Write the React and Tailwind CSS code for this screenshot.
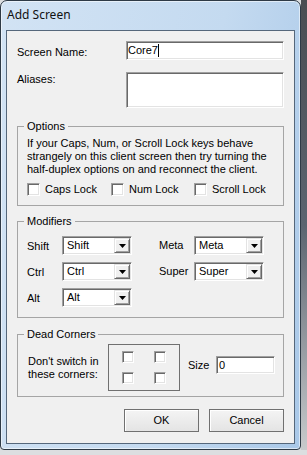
import React from "react";

const sunken =
  "border border-t-[#a0a0a0] border-l-[#a0a0a0] border-r-white border-b-white shadow-[inset_1px_1px_0_#696969,inset_-1px_-1px_0_#e3e3e3] bg-white p-[1px]";

const raised =
  "border border-t-[#e3e3e3] border-l-[#e3e3e3] border-r-[#696969] border-b-[#696969] shadow-[inset_1px_1px_0_#ffffff,inset_-1px_-1px_0_#a0a0a0] bg-[#f0f0f0]";

const CheckBox = ({ small }) => (
  <div className={small ? `${sunken} w-[12px] h-[12px]` : `${sunken} w-[13px] h-[13px]`} />
);

const Combo = ({ value }) => (
  <div className={`${sunken} w-[70px] h-[19px] flex items-center`}>
    <span className="flex-1 pl-[3px] leading-[13px]">{value}</span>
    <div className={`${raised} w-[16px] h-full flex items-center justify-center`}>
      <svg width="7" height="4" viewBox="0 0 7 4">
        <path d="M0 0h7L3.5 4z" fill="#000" />
      </svg>
    </div>
  </div>
);

const Group = ({ title, className, children }) => (
  <fieldset className={`border border-[#a5a5a5] ${className}`}>
    <legend className="ml-[6px] px-[3px] leading-[13px]">{title}</legend>
    {children}
  </fieldset>
);

const ModRow = ({ left, leftVal, right, rightVal }) => (
  <div className="flex items-center h-[19px]">
    <span className="w-[35px] pt-[2px]">{left}</span>
    <Combo value={leftVal} />
    {right && (
      <>
        <span className="ml-[27px] w-[35px]">{right}</span>
        <Combo value={rightVal} />
      </>
    )}
  </div>
);

const Button = ({ children }) => (
  <button className="w-[75px] h-[23px] border border-[#707070] bg-[linear-gradient(to_bottom,#f4f4f4,#e4e4e4)] shadow-[inset_1px_1px_0_#ffffff] text-[11px] leading-[13px]">
    {children}
  </button>
);

export default function App() {
  return (
    <div className="w-[307px] h-[455px] overflow-hidden bg-[#dcdee0] flex flex-col font-['Liberation_Sans',Arial,sans-serif] text-[11px] leading-[13px] text-black">
      <div className="flex h-[450px]">
        <div className="w-[301px] h-full flex flex-col rounded-t-[7px] rounded-b-[4px] border border-[#2e3a46] bg-[linear-gradient(100deg,#d2e3f4,#c4daf0_60%,#a9c8e8)] shadow-[inset_0_0_0_1px_rgba(255,255,255,0.55)] px-[5px] pb-[5px]">
          <div className="h-[29px] flex items-center pl-[1px] pb-[2px] font-['Noto_Sans',sans-serif] text-[12px] text-[#111]">
            Add Screen
          </div>

          <div className="flex-1 border border-[#55677b] bg-[#f0f0f0] pt-[10px] px-[10px] flex flex-col">
            <div className="flex items-center h-[19px]">
              <span className="w-[109px] pt-[3px]">Screen Name:</span>
              <div className={`${sunken} flex-1 h-full flex items-center`}>
                <span>Core7</span>
                <span className="w-[1px] h-[13px] bg-black" />
              </div>
            </div>

            <div className="flex items-start mt-[12px]">
              <span className="w-[109px] pt-[1px]">Aliases:</span>
              <div className={`${sunken} flex-1 h-[36px]`} />
            </div>

            <Group title="Options" className="mt-[12px] h-[86px]">
              <div className="pl-[9px] pt-[4px]">
                <p>
                  If your Caps, Num, or Scroll Lock keys behave
                  <br />
                  strangely on this client screen then try turning the
                  <br />
                  half-duplex options on and reconnect the client.
                </p>
                <div className="flex mt-[7px]">
                  <label className="w-[84px] flex items-center gap-[5px]">
                    <CheckBox />
                    Caps Lock
                  </label>
                  <label className="w-[83px] flex items-center gap-[5px]">
                    <CheckBox />
                    Num Lock
                  </label>
                  <label className="flex items-center gap-[5px]">
                    <CheckBox />
                    Scroll Lock
                  </label>
                </div>
              </div>
            </Group>

            <Group title="Modifiers" className="mt-[9px] h-[103px]">
              <div className="pl-[9px] pt-[8px] flex flex-col gap-[7px]">
                <ModRow left="Shift" leftVal="Shift" right="Meta" rightVal="Meta" />
                <ModRow left="Ctrl" leftVal="Ctrl" right="Super" rightVal="Super" />
                <ModRow left="Alt" leftVal="Alt" />
              </div>
            </Group>

            <Group title="Dead Corners" className="mt-[10px] h-[69px]">
              <div className="pl-[10px] pt-[3px] flex items-center">
                <span className="w-[80px]">
                  Don't switch in
                  <br />
                  these corners:
                </span>
                <div className="w-[72px] h-[47px] border border-[#707070] grid grid-cols-[12px_12px] gap-x-[20px] gap-y-[9px] content-center justify-center">
                  <CheckBox small />
                  <CheckBox small />
                  <CheckBox small />
                  <CheckBox small />
                </div>
                <div className="flex items-center mb-[5px]">
                  <span className="ml-[8px] w-[28px]">Size</span>
                  <div className={`${sunken} w-[59px] h-[18px] flex items-center`}>
                    <span className="pl-[1px]">0</span>
                  </div>
                </div>
              </div>
            </Group>

            <div className="flex justify-end gap-[10px] mt-[12px]">
              <Button>OK</Button>
              <Button>Cancel</Button>
            </div>
          </div>
        </div>
        <div className="flex-1 bg-[linear-gradient(to_bottom,#4a4d52,#5b6470_50%,#c8cacc)]" />
      </div>
    </div>
  );
}
